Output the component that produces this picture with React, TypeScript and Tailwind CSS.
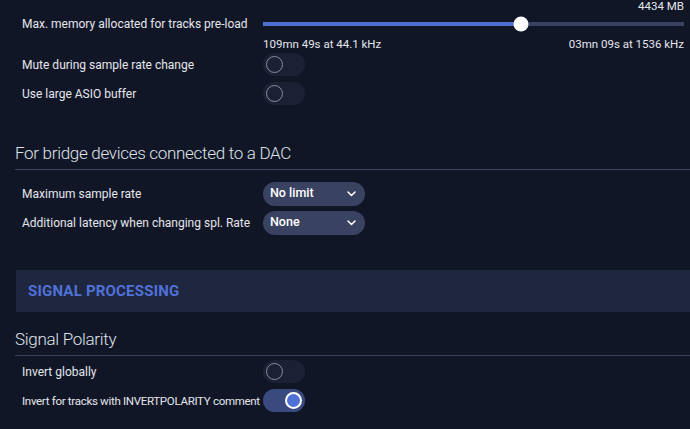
import React, { useState } from 'react';

const font = { fontFamily: 'Roboto, "Noto Sans", sans-serif' };

const Toggle: React.FC<{ on?: boolean }> = ({ on = false }) => (
  <div
    className={`flex h-[23px] w-[42px] shrink-0 items-center rounded-full px-[3px] ${
      on ? 'justify-end bg-[#3b4a7e]' : 'justify-start bg-[#1b2035]'
    }`}
  >
    {on ? (
      <div className="h-[17px] w-[17px] rounded-full border-2 border-white bg-[#4f72d6]" />
    ) : (
      <div className="h-[17px] w-[17px] rounded-full border-[1.5px] border-[#8a8f9e]" />
    )}
  </div>
);

const Select: React.FC<{ value: string }> = ({ value }) => (
  <div className="flex h-[24px] w-[102px] shrink-0 items-center justify-between rounded-full bg-[#3a4262] pl-[7px] pr-[9px]">
    <span className="text-[12.5px] font-medium text-white">{value}</span>
    <svg width="9" height="6" viewBox="0 0 9 6" fill="none">
      <path d="M1 1l3.5 3.5L8 1" stroke="#fff" strokeWidth="1.5" strokeLinecap="round" strokeLinejoin="round" />
    </svg>
  </div>
);

const Row: React.FC<{ label: string; children: React.ReactNode; tight?: boolean }> = ({ label, children, tight }) => (
  <div className="flex h-[29px] items-center pl-[22px]">
    <div
      className={`w-[241px] shrink-0 whitespace-nowrap leading-[16px] text-[#e4e6ec] ${
        tight ? 'text-[11.5px] tracking-[-0.3px]' : 'text-[12px]'
      }`}
    >
      {label}
    </div>
    {children}
  </div>
);

const SectionTitle: React.FC<{ title: string }> = ({ title }) => (
  <div className="ml-[15px] border-b border-[#3a4260] pb-[4px]">
    <h3 className="text-[17px] font-light leading-[24px] tracking-[-0.3px] text-[#dfe2ea]">{title}</h3>
  </div>
);

export default function App() {
  const [memory] = useState(4434);
  const pct = 61.3;

  return (
    <div className="h-[429px] w-[690px] overflow-hidden bg-[#111627]" style={font}>
      <div className="flex h-[12px] justify-end pr-[6px] text-[11.5px] leading-[12px] text-[#e4e6ec]">
        {memory} MB
      </div>

      <div className="mt-[5px] flex h-[14px] items-center pl-[22px] pr-[6px]">
        <div className="w-[241px] shrink-0 whitespace-nowrap text-[12px] leading-[16px] text-[#e4e6ec]">
          Max. memory allocated for tracks pre-load
        </div>
        <div className="relative flex h-[14px] flex-1 items-center">
          <div className="h-[4px] w-full bg-[#3a4160]">
            <div className="h-full bg-[#4f6fd0]" style={{ width: `${pct}%` }} />
          </div>
          <div
            className="absolute top-1/2 h-[15px] w-[15px] -translate-x-1/2 -translate-y-1/2 rounded-full bg-white"
            style={{ left: `${pct}%` }}
          />
        </div>
      </div>
      <div className="mt-[5px] flex h-[16px] justify-between pl-[263px] pr-[6px] text-[11.5px] leading-[16px] text-[#e4e6ec]">
        <span>109mn 49s at 44.1 kHz</span>
        <span>03mn 09s at 1536 kHz</span>
      </div>

      <div className="-mt-[2px]">
        <Row label="Mute during sample rate change">
          <Toggle />
        </Row>
        <Row label="Use large ASIO buffer">
          <Toggle />
        </Row>
      </div>

      <div className="mt-[33px]">
        <SectionTitle title="For bridge devices connected to a DAC" />
        <div className="pt-[9px]">
          <Row label="Maximum sample rate">
            <Select value="No limit" />
          </Row>
          <Row label="Additional latency when changing spl. Rate">
            <Select value="None" />
          </Row>
        </div>
      </div>

      <div className="ml-[16px] mt-[33px] flex h-[42px] items-center bg-[#1f2640] pl-[12px]">
        <h2 className="text-[15px] font-bold tracking-[0.2px] text-[#4f72d8]">SIGNAL PROCESSING</h2>
      </div>

      <div className="mt-[15px]">
        <SectionTitle title="Signal Polarity" />
        <div className="pt-[1px]">
          <Row label="Invert globally">
            <Toggle />
          </Row>
          <Row label="Invert for tracks with INVERTPOLARITY comment" tight>
            <Toggle on />
          </Row>
        </div>
      </div>
    </div>
  );
}
